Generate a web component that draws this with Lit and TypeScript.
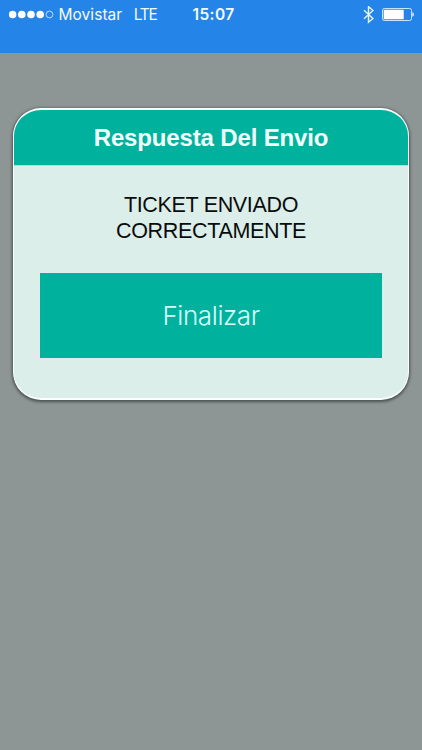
import { LitElement, html, css } from "lit";
import { customElement, property } from "lit/decorators.js";

@customElement("status-bar")
class StatusBar extends LitElement {
  @property() carrier = "";
  @property() network = "";
  @property() time = "";

  static styles = css`
    :host {
      display: block;
      height: 53px;
      background: #2584e8;
      color: #f3fbff;
      font-family: Inter, "Liberation Sans", sans-serif;
    }
    .row {
      display: grid;
      grid-template-columns: 1fr auto 1fr;
      align-items: center;
      height: 28px;
      padding: 0 8px 0 9px;
      line-height: 28px;
    }
    .left {
      display: flex;
      align-items: center;
      font-size: 15.5px;
      white-space: nowrap;
    }
    .carrier {
      padding-top: 1px;
      margin-left: 4.5px;
      letter-spacing: 0.05px;
    }
    .network {
      padding-top: 1px;
      margin-left: 11.5px;
      letter-spacing: -1.3px;
    }
    .time {
      padding: 1px 0 0 4px;
      font-size: 15.5px;
      font-weight: 600;
      letter-spacing: 0.4px;
    }
    .right {
      display: flex;
      align-items: center;
      justify-content: flex-end;
      gap: 8px;
    }
    svg {
      display: block;
    }
  `;

  render() {
    return html`
      <div class="row">
        <div class="left">
          <svg width="45" height="9" viewBox="0 0 45 9">
            <circle cx="3.6" cy="4.5" r="3.8" fill="#fff" />
            <circle cx="12.8" cy="4.5" r="3.8" fill="#fff" />
            <circle cx="22" cy="4.5" r="3.8" fill="#fff" />
            <circle cx="31.2" cy="4.5" r="3.8" fill="#fff" />
            <circle cx="40.5" cy="4.5" r="3.4" fill="none" stroke="#c5e4ff" stroke-width="0.9" />
          </svg>
          <span class="carrier">${this.carrier}</span>
          <span class="network">${this.network}</span>
        </div>
        <div class="time">${this.time}</div>
        <div class="right">
          <svg width="11" height="18" viewBox="0 0 11 18">
            <path d="M1 4.3 L10 12.5 L5.5 16.3 V0.7 L10 4.5 L1 12.7" fill="none" stroke="#e4f4ff" stroke-width="1.45" />
          </svg>
          <svg width="32" height="13" viewBox="0 0 32 13">
            <rect x="0.5" y="0.5" width="29" height="12" rx="1.8" fill="none" stroke="#c5e4ff" />
            <rect x="1.7" y="1.7" width="20" height="9.6" rx="0.4" fill="#fff" />
            <path d="M30.3 4.2 Q32 4.6 32 6.5 Q32 8.4 30.3 8.8 Z" fill="#d5ecff" />
          </svg>
        </div>
      </div>
    `;
  }
}

@customElement("result-dialog")
class ResultDialog extends LitElement {
  @property() heading = "";
  @property() message = "";
  @property() action = "";

  static styles = css`
    :host {
      display: block;
      font-family: "Liberation Sans", Arial, sans-serif;
    }
    .card {
      box-sizing: border-box;
      height: 292px;
      border: solid #fbffff;
      border-width: 2px 1px;
      border-radius: 28px;
      background: #dceeea;
      overflow: hidden;
      box-shadow: 0 1px 3px 1px rgba(40, 45, 45, 0.65);
    }
    .heading {
      margin: 0;
      height: 55px;
      line-height: 56px;
      border-bottom: 1px solid #a2e4da;
      background: #00b29e;
      color: #f2fffd;
      font-size: 24px;
      font-weight: 700;
      letter-spacing: -0.15px;
      text-align: center;
    }
    .message {
      width: 220px;
      margin: 26px auto 0;
      color: #080c0c;
      font-size: 21.5px;
      line-height: 26px;
      letter-spacing: -0.33px;
      text-align: center;
    }
    .action {
      display: block;
      width: 342px;
      height: 85px;
      margin: 29px 0 0 26px;
      padding: 0;
      border: 0;
      border-radius: 0;
      background: #00b29e;
      color: #d5fff9;
      font-family: Inter, "Liberation Sans", sans-serif;
      font-size: 26px;
      font-weight: 300;
      letter-spacing: -0.4px;
    }
  `;

  render() {
    return html`
      <section class="card">
        <h1 class="heading">${this.heading}</h1>
        <p class="message">${this.message}</p>
        <button class="action">${this.action}</button>
      </section>
    `;
  }
}

@customElement("app-root")
class AppRoot extends LitElement {
  static styles = css`
    :host {
      display: block;
      height: 100vh;
      overflow: hidden;
      background: #8e9695;
    }
    .dialog {
      margin: 55px 13px 0;
    }
  `;

  render() {
    return html`
      <status-bar carrier="Movistar" network="LTE" time="15:07"></status-bar>
      <result-dialog
        class="dialog"
        heading="Respuesta Del Envio"
        message="TICKET ENVIADO CORRECTAMENTE"
        action="Finalizar"
      ></result-dialog>
    `;
  }
}
